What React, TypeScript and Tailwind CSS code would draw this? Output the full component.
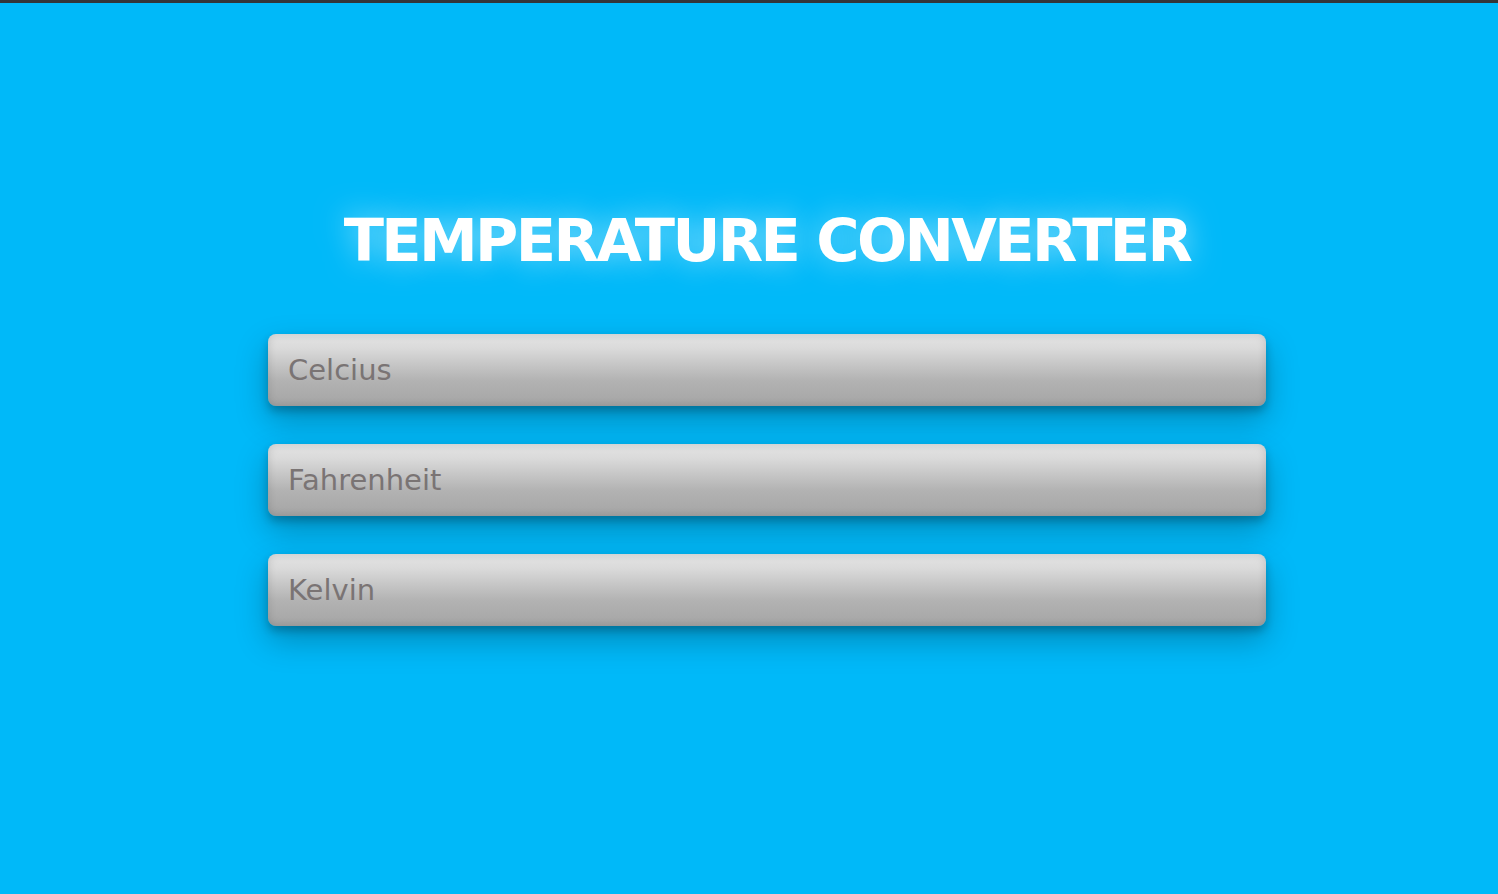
import { useState } from "react";

const fields = ["Celcius", "Fahrenheit", "Kelvin"];

export default function App() {
  const [values, setValues] = useState<Record<string, string>>({});

  return (
    <div className="min-h-[894px] border-t-[3px] border-[#333639] bg-[#00b9f9] font-['DejaVu_Sans',sans-serif]">
      <div className="ml-[268px] w-[998px] pt-[200px]">
        <h1 className="text-center text-[59px] font-bold leading-[76px] tracking-[-2.6px] text-white [text-shadow:0_0_30px_rgba(255,255,255,0.55)]">
          TEMPERATURE CONVERTER
        </h1>
        <div className="mt-[55px] flex flex-col gap-[38px]">
          {fields.map((name) => (
            <input
              key={name}
              placeholder={name}
              value={values[name] ?? ""}
              onChange={(e) => setValues({ ...values, [name]: e.target.value })}
              className="h-[72px] w-full rounded-[8px] bg-[linear-gradient(to_bottom,#e4e4e4,#dadada_20%,#b2b2b2_65%,#a5a5a5)] px-5 text-[29px] text-[#666] shadow-[inset_0_0_8px_rgba(0,0,0,0.15),0_5px_8px_rgba(0,0,0,0.22),0_14px_32px_rgba(0,0,0,0.25)] outline-none placeholder:text-[#7a7474]"
            />
          ))}
        </div>
      </div>
    </div>
  );
}
